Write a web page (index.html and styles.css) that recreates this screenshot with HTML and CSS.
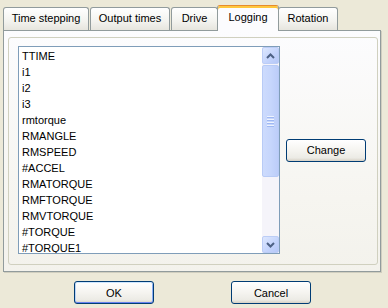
FILE: index.html
```html
<!DOCTYPE html>
<html lang="en">

<head>
    <meta charset="UTF-8">
    <title>Logging</title>
    <link rel="stylesheet" href="styles.css">
</head>

<body>
    <div class="dialog">
        <div class="tabs">
            <div class="tab tab-time">Time stepping</div>
            <div class="tab tab-output">Output times</div>
            <div class="tab tab-drive">Drive</div>
            <div class="tab tab-logging active">Logging</div>
            <div class="tab tab-rotation">Rotation</div>
        </div>

        <div class="panel">
            <div class="group">
                <div class="listbox">
                    <ul class="items">
                        <li>TTIME</li>
                        <li>i1</li>
                        <li>i2</li>
                        <li>i3</li>
                        <li>rmtorque</li>
                        <li>RMANGLE</li>
                        <li>RMSPEED</li>
                        <li>#ACCEL</li>
                        <li>RMATORQUE</li>
                        <li>RMFTORQUE</li>
                        <li>RMVTORQUE</li>
                        <li>#TORQUE</li>
                        <li>#TORQUE1</li>
                    </ul>
                    <!-- скроллбар рисуем сами -->
                    <div class="scrollbar">
                        <div class="sb-btn">
                            <svg width="9" height="6" viewBox="0 0 9 6"><path d="M1 5 L4.5 1.5 L8 5" fill="none" stroke="#4d6185" stroke-width="2"/></svg>
                        </div>
                        <div class="sb-thumb">
                            <span class="grip"></span>
                            <span class="grip"></span>
                            <span class="grip"></span>
                            <span class="grip"></span>
                        </div>
                        <div class="sb-track"></div>
                        <div class="sb-btn">
                            <svg width="9" height="6" viewBox="0 0 9 6"><path d="M1 1 L4.5 4.5 L8 1" fill="none" stroke="#4d6185" stroke-width="2"/></svg>
                        </div>
                    </div>
                </div>
                <button class="btn btn-change">Change</button>
            </div>
        </div>

        <div class="footer">
            <button class="btn btn-default">OK</button>
            <button class="btn">Cancel</button>
        </div>
    </div>
</body>

</html>
```

FILE: styles.css
```css
body {
    margin: 0;
    width: 388px;
    height: 308px;
    background-color: #ece9d8;
    font-family: "Liberation Sans", Arial, sans-serif;
    font-size: 11px;
    color: #000;
    overflow: hidden;
}

.tabs {
    display: flex;
    align-items: flex-end;
    height: 30px;
    padding-left: 3px;
}

.tab {
    box-sizing: border-box;
    height: 23px;
    line-height: 21px;
    text-align: center;
    border: 1px solid #919b9c;
    border-bottom: none;
    border-radius: 3px 3px 0 0;
    background: linear-gradient(#ffffff, #f3f3ef 60%, #e6e5de);
}

.tab-time {
    width: 86px;
}

.tab-output {
    width: 80px;
    margin-left: 1px;
}

.tab-drive {
    width: 47px;
    margin-left: 1px;
}

.tab-logging {
    width: 62px;
    margin-left: -1px;
}

.tab-rotation {
    width: 60px;
    margin-left: -1px;
}

.tab.active {
    position: relative;
    z-index: 1;
    height: 26px;
    margin-bottom: -1px;
    line-height: 22px;
    background: #fcfcfe;
    border-top: 1px solid #e68b2c;
    box-shadow: inset 0 2px 0 #ffc73c;
}

.panel {
    box-sizing: border-box;
    width: 378px;
    height: 242px;
    margin-left: 3px;
    padding: 6px 2px 6px 4px;
    border: 1px solid #919b9c;
    background: linear-gradient(#fcfcfe, #f6f5f0 70%, #f3f2ec);
    box-shadow: 1px 1px 0 #d0cebf;
}

.group {
    box-sizing: border-box;
    height: 228px;
    display: flex;
    align-items: flex-start;
    padding: 8px 0 0 9px;
    border: 1px solid #d0d0bf;
    border-radius: 3px;
}

.listbox {
    box-sizing: border-box;
    width: 262px;
    height: 208px;
    display: flex;
    border: 1px solid #7f9db9;
    background-color: #fff;
}

.items {
    flex: 1;
    margin: 0;
    padding: 1px 0 0 3px;
    list-style: none;
    overflow: hidden;
}

.items li {
    height: 16px;
    line-height: 16px;
}

.scrollbar {
    width: 17px;
    display: flex;
    flex-direction: column;
    background-color: #f5f4fa;
}

.sb-btn {
    box-sizing: border-box;
    height: 17px;
    display: flex;
    align-items: center;
    justify-content: center;
    border: 1px solid #bccdf6;
    border-radius: 2px;
    background: linear-gradient(135deg, #dde7fe, #c3d3fc 60%, #b5c7f7);
}

.sb-thumb {
    box-sizing: border-box;
    height: 112px;
    display: flex;
    flex-direction: column;
    align-items: center;
    justify-content: center;
    gap: 1px;
    margin-top: 1px;
    border: 1px solid #b8cbf6;
    border-radius: 2px;
    background: linear-gradient(90deg, #cddbfd, #c6d6fc 50%, #bccdf9);
}

.grip {
    width: 7px;
    height: 1px;
    background-color: #eef3fe;
    box-shadow: 0 1px 0 #9fb8f3;
    margin-bottom: 1px;
}

.sb-track {
    flex: 1;
}

.btn {
    box-sizing: border-box;
    width: 80px;
    height: 23px;
    padding: 0;
    font-family: "Liberation Sans", Arial, sans-serif;
    font-size: 11px;
    color: #000;
    border: 1px solid #003c74;
    border-radius: 3px;
    background: linear-gradient(#ffffff, #f5f4f0 50%, #ecebe5 85%, #d6d0c5);
}

.btn-change {
    align-self: center;
    margin-left: 6px;
    margin-top: -10px;
}

.btn-default {
    box-shadow: inset 0 1px 0 #cee7ff, inset 0 -1px 0 #6982ee, inset 1px 0 0 #bcd4f6, inset -1px 0 0 #89adf3;
}

.footer {
    display: flex;
    gap: 77px;
    padding: 9px 0 0 74px;
}
```
